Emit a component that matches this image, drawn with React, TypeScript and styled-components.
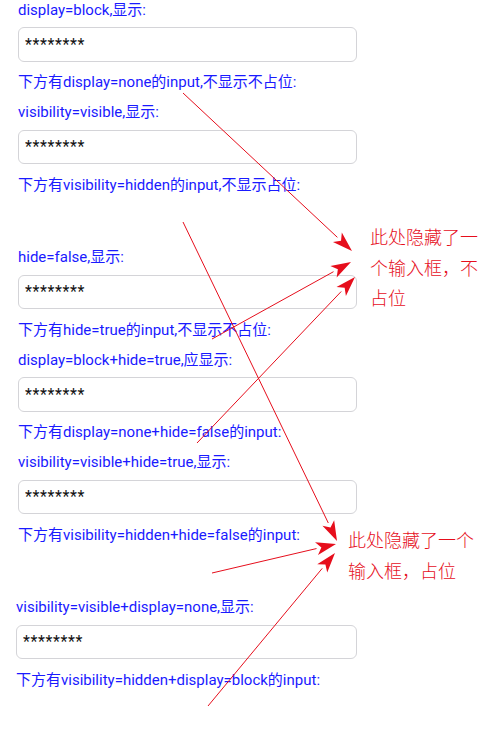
import React from "react";
import styled, { createGlobalStyle } from "styled-components";

const Global = createGlobalStyle`
  html, body { margin: 0; padding: 0; background: #fff; }
  body { width: 487px; height: 741px; overflow: hidden; }
`;

const Page = styled.div`
  position: relative;
  width: 487px;
  height: 741px;
  overflow: hidden;
`;

const Column = styled.div`
  display: flex;
  flex-direction: column;
  width: 339px;
  padding-left: 18px;
  margin-top: -7px;
`;

const Section = styled.div<{ $shift?: number }>`
  display: flex;
  flex-direction: column;
  margin-left: ${(p) => p.$shift ?? 0}px;
`;

const Label = styled.div`
  height: 30px;
  display: flex;
  align-items: center;
  font-family: Roboto, "Noto Sans CJK SC", sans-serif;
  font-size: 15px;
  color: #1a1aff;
  white-space: nowrap;
`;

const Field = styled.input<{ $hidden?: boolean }>`
  box-sizing: border-box;
  height: 34.5px;
  width: 100%;
  margin: 4px 0;
  padding: 0 6px;
  border: 1px solid #d4d4d8;
  border-radius: 6px;
  font-family: Roboto, "Noto Sans", sans-serif;
  font-size: 16px;
  letter-spacing: 0.6px;
  color: #111;
  background: #fff;
  outline: none;
  visibility: ${(p) => (p.$hidden ? "hidden" : "visible")};
`;

const Note = styled.div<{ $left: number; $top: number; $width: number }>`
  position: absolute;
  left: ${(p) => p.$left}px;
  top: ${(p) => p.$top}px;
  width: ${(p) => p.$width}px;
  font-family: "Noto Sans CJK SC", sans-serif;
  font-size: 18px;
  line-height: 30.5px;
  color: #e60e1c;
  font-weight: 300;
`;

const Overlay = styled.svg`
  position: absolute;
  left: 0;
  top: 0;
  pointer-events: none;
`;

const arrows: [number, number, number, number][] = [
  [183, 93, 352, 251],
  [212, 339, 351, 262],
  [197, 443, 355, 277],
  [183, 222, 337, 541],
  [212, 573, 336, 544],
  [208, 706, 335, 553],
];

function Arrow({ x1, y1, x2, y2 }: { x1: number; y1: number; x2: number; y2: number }) {
  const dx = x2 - x1;
  const dy = y2 - y1;
  const len = Math.hypot(dx, dy);
  const ux = dx / len;
  const uy = dy / len;
  const hl = 20;
  const hw = 6.5;
  const bx = x2 - ux * hl;
  const by = y2 - uy * hl;
  const px = -uy * hw;
  const py = ux * hw;
  return (
    <g>
      <line x1={x1} y1={y1} x2={bx} y2={by} stroke="#e60e1c" strokeWidth={1} />
      <polygon
        points={`${x2},${y2} ${bx + px},${by + py} ${bx + ux * 5},${by + uy * 5} ${bx - px},${by - py}`}
        fill="#e60e1c"
      />
    </g>
  );
}

const STARS = "********";

export default function App() {
  return (
    <Page>
      <Global />
      <Column>
        <Section>
          <Label>display=block,显示:</Label>
          <Field readOnly value={STARS} />
          <Label>下方有display=none的input,不显示不占位:</Label>
        </Section>
        <Section>
          <Label>visibility=visible,显示:</Label>
          <Field readOnly value={STARS} />
          <Label>下方有visibility=hidden的input,不显示占位:</Label>
          <Field readOnly value={STARS} $hidden />
        </Section>
        <Section>
          <Label>hide=false,显示:</Label>
          <Field readOnly value={STARS} />
          <Label>下方有hide=true的input,不显示不占位:</Label>
        </Section>
        <Section>
          <Label>display=block+hide=true,应显示:</Label>
          <Field readOnly value={STARS} />
          <Label>下方有display=none+hide=false的input:</Label>
        </Section>
        <Section>
          <Label>visibility=visible+hide=true,显示:</Label>
          <Field readOnly value={STARS} />
          <Label>下方有visibility=hidden+hide=false的input:</Label>
          <Field readOnly value={STARS} $hidden />
        </Section>
        <Section $shift={-2}>
          <Label>visibility=visible+display=none,显示:</Label>
          <Field readOnly value={STARS} />
          <Label>下方有visibility=hidden+display=block的input:</Label>
        </Section>
      </Column>
      <Overlay width={487} height={741} viewBox="0 0 487 741">
        {arrows.map(([x1, y1, x2, y2], i) => (
          <Arrow key={i} x1={x1} y1={y1} x2={x2} y2={y2} />
        ))}
      </Overlay>
      <Note $left={370} $top={221} $width={112}>
        此处隐藏了一个输入框，不占位
      </Note>
      <Note $left={348} $top={524} $width={130}>
        此处隐藏了一个输入框，占位
      </Note>
    </Page>
  );
}
